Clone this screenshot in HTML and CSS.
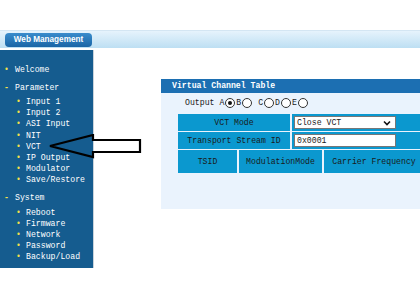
FILE: index.html
```html
<!DOCTYPE html>
<html lang="en">
<head>
    <meta charset="UTF-8">
    <title>Web Management</title>
    <link rel="stylesheet" href="styles.css">
</head>
<body>
    <div class="header">
        <div class="tab">Web Management</div>
    </div>

    <div class="main">
        <div class="sidebar">
            <div class="menu-top"><span class="dot">&bull;</span>Welcome</div>
            <div class="menu-top group"><span class="dash">-</span>Parameter</div>
            <div class="menu-sub"><span class="dot">&bull;</span>Input 1</div>
            <div class="menu-sub"><span class="dot">&bull;</span>Input 2</div>
            <div class="menu-sub"><span class="dot">&bull;</span>ASI Input</div>
            <div class="menu-sub"><span class="dot">&bull;</span>NIT</div>
            <div class="menu-sub"><span class="dot">&bull;</span>VCT</div>
            <div class="menu-sub"><span class="dot">&bull;</span>IP Output</div>
            <div class="menu-sub"><span class="dot">&bull;</span>Modulator</div>
            <div class="menu-sub"><span class="dot">&bull;</span>Save/Restore</div>
            <div class="menu-top group"><span class="dash">-</span>System</div>
            <div class="menu-sub first"><span class="dot">&bull;</span>Reboot</div>
            <div class="menu-sub"><span class="dot">&bull;</span>Firmware</div>
            <div class="menu-sub"><span class="dot">&bull;</span>Network</div>
            <div class="menu-sub"><span class="dot">&bull;</span>Password</div>
            <div class="menu-sub"><span class="dot">&bull;</span>Backup/Load</div>
        </div>

        <div class="panel">
            <div class="panel-title">Virtual Channel Table</div>
            <div class="output-row">
                Output A<span class="radio checked"></span>B<span class="radio"></span>&nbsp;C<span class="radio"></span>D<span class="radio"></span>E<span class="radio"></span>
            </div>
            <div class="vct-table">
                <div class="row">
                    <div class="cell label">VCT Mode</div>
                    <div class="cell value">
                        <div class="select">Close VCT
                            <svg class="chev" width="8" height="6" viewBox="0 0 8 6"><path d="M1 1.5 L4 4.5 L7 1.5" fill="none" stroke="#111" stroke-width="1.6"/></svg>
                        </div>
                    </div>
                </div>
                <div class="row">
                    <div class="cell label">Transport Stream ID</div>
                    <div class="cell value">
                        <div class="text-input">0x0001</div>
                    </div>
                </div>
                <div class="row head">
                    <div class="cell tsid">TSID</div>
                    <div class="cell mod">ModulationMode</div>
                    <div class="cell freq">Carrier Frequency</div>
                </div>
            </div>
        </div>
    </div>

    <svg class="arrow" width="100" height="30" viewBox="0 0 100 30">
        <polygon points="2,12 45,1 45,6 92,6 92,18 45,18 45,23" fill="none" stroke="#000" stroke-width="2.2" stroke-linejoin="miter"/>
    </svg>
</body>
</html>
```

FILE: styles.css
```css
body {
    margin: 0;
    padding: 0;
    overflow: hidden;
    background-color: #fff;
    font-family: 'Liberation Mono', 'DejaVu Sans Mono', monospace;
    font-size: 8.2px;
    width: 420px;
    height: 300px;
    position: relative;
    white-space: nowrap;
}

.header {
    margin-top: 30px;
    height: 18px;
    background: linear-gradient(#e6f3fc, #bddff3);
    border-top: 1px solid #d4e6f3;
    box-sizing: border-box;
    padding: 2px 0 0 5px;
}

.tab {
    width: 87px;
    height: 14px;
    border-radius: 4px;
    background: linear-gradient(#3a8ccc, #1965a6);
    color: #fff;
    font-family: 'Liberation Sans', Arial, sans-serif;
    font-weight: bold;
    font-size: 8.2px;
    line-height: 14px;
    text-align: center;
}

.main {
    display: flex;
    margin-top: 2px;
}

.sidebar {
    width: 94px;
    height: 218px;
    flex-shrink: 0;
    background-color: #155c8f;
    border-right: 1px solid #c9d3db;
    color: #fff;
    padding-top: 14px;
    box-sizing: border-box;
}

.menu-top {
    padding-left: 4px;
    line-height: 12px;
    height: 12px;
}

.menu-top.group {
    margin-top: 6px;
    margin-bottom: 2px;
}

.menu-sub {
    padding-left: 16px;
    line-height: 11.2px;
    height: 11.2px;
}

.menu-sub.first {
    margin-top: 3px;
}

.dot {
    color: #f2e14a;
    display: inline-block;
    width: 10px;
}

.menu-top .dot,
.dash {
    color: #f2e14a;
    display: inline-block;
    width: 11px;
}

.dash {
    font-weight: bold;
}

.panel {
    margin-left: 67px;
    margin-top: 29px;
    width: 300px;
    height: 130px;
    background-color: #eaf3fd;
    flex-shrink: 0;
}

.panel-title {
    height: 14px;
    line-height: 14px;
    background-color: #1c6fb2;
    color: #fff;
    font-weight: bold;
    padding-left: 11px;
}

.output-row {
    height: 20px;
    line-height: 20px;
    padding-left: 24px;
    color: #222;
    display: flex;
    align-items: center;
}

.radio {
    display: inline-block;
    width: 8px;
    height: 8px;
    border: 1px solid #333;
    border-radius: 50%;
    background-color: #fff;
    margin: 0 1px 0 1px;
    position: relative;
}

.radio.checked::after {
    content: "";
    position: absolute;
    left: 2px;
    top: 2px;
    width: 4px;
    height: 4px;
    border-radius: 50%;
    background-color: #111;
}

.vct-table {
    margin-top: 1px;
    margin-left: 17px;
}

.row {
    display: flex;
    gap: 2px;
    margin-bottom: 1px;
}

.cell {
    background-color: #0b98cf;
    color: #1a1a1a;
    height: 17px;
    line-height: 17px;
    text-align: center;
    flex-shrink: 0;
}

.label {
    width: 112px;
}

.value {
    flex: 1;
    text-align: left;
    padding-left: 2px;
    display: flex;
    align-items: center;
}

.select,
.text-input {
    width: 98px;
    height: 11px;
    line-height: 11px;
    background-color: #fff;
    border: 1px solid #777;
    padding-left: 2px;
    box-sizing: content-box;
    position: relative;
}

.chev {
    position: absolute;
    right: 4px;
    top: 3px;
}

.row.head {
    margin-top: 1px;
}

.row.head .cell {
    height: 23px;
    line-height: 23px;
}

.tsid {
    width: 59px;
}

.mod {
    width: 83px;
}

.freq {
    width: 100px;
}

.arrow {
    position: absolute;
    left: 48px;
    top: 134px;
}
```
